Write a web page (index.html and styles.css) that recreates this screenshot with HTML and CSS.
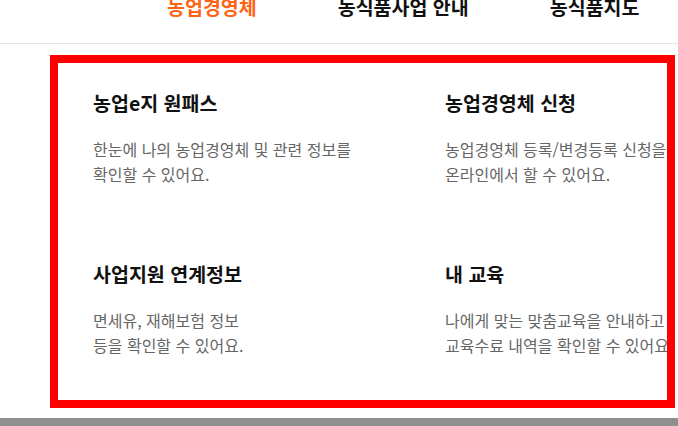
FILE: index.html
```html
<!DOCTYPE html>
<html lang="ko">
<head>
  <meta charset="UTF-8" />
  <title>농업경영체</title>
  <link rel="stylesheet" href="styles.css">
</head>
<body>
  <header class="top-header">
    <nav class="main-nav">
      <a class="nav-item active" href="#">농업경영체</a>
      <a class="nav-item" href="#">농식품사업 안내</a>
      <a class="nav-item" href="#">농식품지도</a>
    </nav>
  </header>

  <main class="content">
    <section class="service-box">
      <div class="service-grid">
        <div class="service">
          <h3>농업e지 원패스</h3>
          <p>한눈에 나의 농업경영체 및 관련 정보를<br>확인할 수 있어요.</p>
        </div>
        <div class="service">
          <h3>농업경영체 신청</h3>
          <p>농업경영체 등록/변경등록 신청을<br>온라인에서 할 수 있어요.</p>
        </div>
        <div class="service">
          <h3>사업지원 연계정보</h3>
          <p>면세유, 재해보험 정보<br>등을 확인할 수 있어요.</p>
        </div>
        <div class="service">
          <h3>내 교육</h3>
          <p>나에게 맞는 맞춤교육을 안내하고<br>교육수료 내역을 확인할 수 있어요.</p>
        </div>
      </div>
    </section>
  </main>

  <div class="bottom-bar"></div>
</body>
</html>
```

FILE: styles.css
```css
body {
  margin: 0;
  font-family: "Noto Sans CJK KR", "Noto Sans", sans-serif;
  background-color: #ffffff;
  color: #111111;
  overflow: hidden;
}

.top-header {
  height: 43px;
  border-bottom: 1px solid #e6e6e6;
  overflow: hidden;
}

.main-nav {
  display: flex;
  gap: 81px;
  padding-left: 167px;
  margin-top: -3px;
}

.nav-item {
  font-size: 19.5px;
  line-height: 19.5px;
  font-weight: 700;
  color: #111111;
  text-decoration: none;
  white-space: nowrap;
}

.nav-item.active {
  color: #ff6414;
}

.content {
  padding: 11px 3px 0 50px;
}

.service-box {
  height: 337px;
  border: 8px solid #ff0000;
  overflow: hidden;
}

.service-grid {
  display: grid;
  grid-template-columns: 352px 352px;
  row-gap: 74px;
  padding: 27px 0 0 35px;
}

.service h3 {
  margin: 0;
  font-size: 19.5px;
  line-height: 25px;
  font-weight: 700;
  color: #111111;
  white-space: nowrap;
}

.service p {
  margin: 22px 0 0;
  font-size: 16px;
  line-height: 25px;
  color: #666666;
  white-space: nowrap;
}

.bottom-bar {
  height: 8px;
  margin-top: 10px;
  background-color: #8f8f8f;
}
```
